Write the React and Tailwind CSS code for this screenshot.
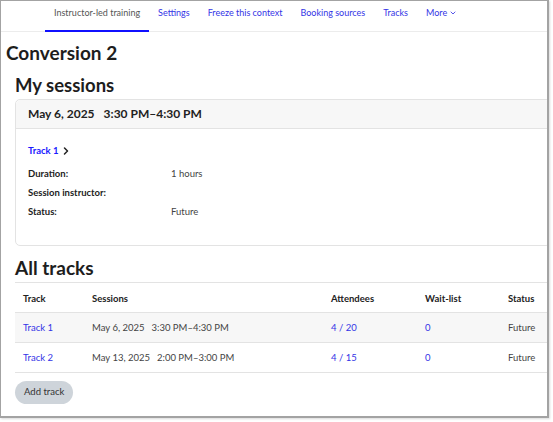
import React from 'react';
import { ChevronDown, ChevronRight } from 'lucide-react';

const font = { fontFamily: 'Lato, "Noto Sans", sans-serif' };

const NavTab = ({ label, active, children }) => (
    <div className={`relative flex items-start pt-[5px] h-full px-[9px] ${active ? 'text-[#555]' : 'text-[#3434e6]'}`}>
        <span className="flex items-center gap-[2px]">{label}{children}</span>
        {active && <div className="absolute left-0 right-0 bottom-[-1px] h-[2px] bg-[#1010ff]" />}
    </div>
);

const Row = ({ label, value }) => (
    <div className="flex items-center h-[19px] pt-[1px]">
        <div className="w-[143px] font-bold text-[#222]">{label}</div>
        <div className="text-[#444]">{value}</div>
    </div>
);

const tracks = [
    { name: 'Track 1', date: 'May 6, 2025', time: '3:30 PM–4:30 PM', att: '4 / 20' },
    { name: 'Track 2', date: 'May 13, 2025', time: '2:00 PM–3:00 PM', att: '4 / 15' },
];

export default function App() {
    return (
        <div className="w-[553px] h-[422px] bg-white text-[9.5px]" style={font}>
            <div className="w-[549px] h-[418px] border-l border-t border-r-2 border-b-2 border-[#a3a3a3] overflow-hidden shadow-[1px_1px_2px_rgba(0,0,0,0.15)]">
                <div className="flex h-[31px] pl-[44px] border-b border-[#ececec] text-[9px]">
                    <NavTab label="Instructor-led training" active />
                    <NavTab label="Settings" />
                    <NavTab label="Freeze this context" />
                    <NavTab label="Booking sources" />
                    <NavTab label="Tracks" />
                    <NavTab label="More">
                        <ChevronDown size={8} strokeWidth={2.5} />
                    </NavTab>
                </div>

                <h1 className="pl-[5px] mt-[8px] text-[19px] leading-[26px] font-bold text-[#1d1d1d]">Conversion 2</h1>

                <div className="pl-[14px]">
                    <h2 className="mt-[6px] text-[18.5px] leading-[26px] font-bold text-[#1d1d1d]">My sessions</h2>

                    <div className="mt-[1px] -mr-[4px] border border-[#e3e3e3] rounded-[5px] h-[147px]">
                        <div className="h-[29px] flex items-center px-[12px] bg-[#f7f7f7] border-b border-[#e3e3e3] rounded-t-[5px] text-[12px] font-bold text-[#222]">
                            <span>May 6, 2025</span>
                            <span className="ml-[9px]">3:30 PM–4:30 PM</span>
                        </div>
                        <div className="px-[12px] pt-[14px]">
                            <div className="flex items-center h-[16px] font-bold text-[#1a1aff]">
                                Track 1
                                <ChevronRight size={12} strokeWidth={3} className="ml-[1px] text-[#222]" />
                            </div>
                            <div className="mt-[5px]">
                                <Row label="Duration:" value="1 hours" />
                                <Row label="Session instructor:" value="" />
                                <Row label="Status:" value="Future" />
                            </div>
                        </div>
                    </div>

                    <h2 className="mt-[9px] text-[19px] leading-[26px] font-bold text-[#1d1d1d]">All tracks</h2>

                    <div className="mt-[1px] -mr-[4px]">
                        <div className="grid grid-cols-[69px_239px_94px_83px_1fr] h-[31px] pt-[3px] items-center border-t border-b border-[#e3e3e3] font-bold text-[#222] pl-[8px]">
                            <div>Track</div>
                            <div>Sessions</div>
                            <div>Attendees</div>
                            <div>Wait-list</div>
                            <div>Status</div>
                        </div>
                        {tracks.map((t, i) => (
                            <div
                                key={t.name}
                                className={`grid grid-cols-[69px_239px_94px_83px_1fr] h-[30px] pt-[2px] items-center border-b border-[#e3e3e3] pl-[8px] ${i === 0 ? 'bg-[#f7f7f7]' : ''}`}
                            >
                                <div className="text-[#3434e6]">{t.name}</div>
                                <div className="text-[#444]">
                                    {t.date}
                                    <span className="ml-[7px]">{t.time}</span>
                                </div>
                                <div className="text-[#3434e6]">{t.att}</div>
                                <div className="text-[#3434e6]">0</div>
                                <div className="text-[#444]">Future</div>
                            </div>
                        ))}
                    </div>

                    <button className="mt-[8px] h-[23px] px-[9px] rounded-full bg-[#ced4da] text-[#333]">
                        Add track
                    </button>
                </div>
            </div>
        </div>
    );
}
